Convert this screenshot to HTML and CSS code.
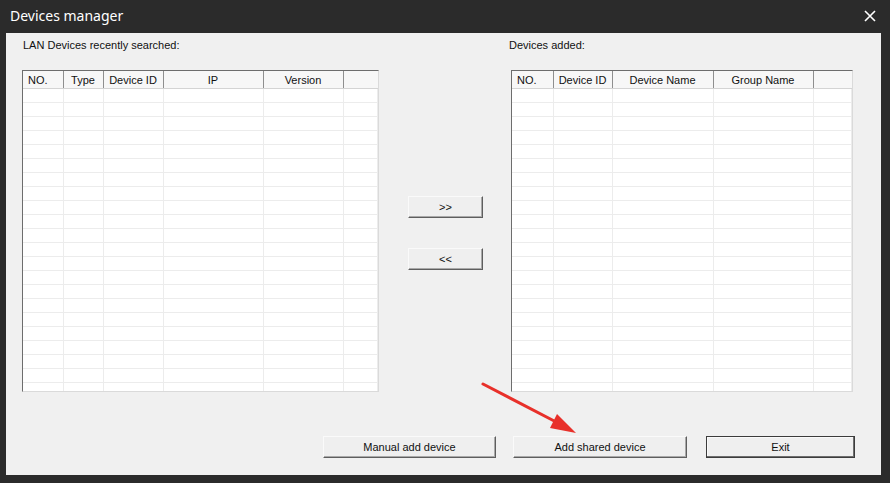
FILE: index.html
```html
<!DOCTYPE html>
<html lang="en">
<head>
    <meta charset="UTF-8">
    <title>Devices manager</title>
    <link rel="stylesheet" href="styles.css">
</head>
<body>
    <div class="window">
        <div class="titlebar">
            <span class="title">Devices manager</span>
            <svg class="close" width="12" height="12" viewBox="0 0 12 12">
                <path d="M1 1 L11 11 M11 1 L1 11" stroke="#fff" stroke-width="1.6"/>
            </svg>
        </div>
        <div class="client">
            <div class="lists">
                <div class="panel">
                    <div class="label">LAN Devices recently searched:</div>
                    <div class="grid left">
                        <table>
                            <colgroup>
                                <col style="width:40px"><col style="width:40px"><col style="width:60px">
                                <col style="width:100px"><col style="width:80px"><col>
                            </colgroup>
                            <thead>
                                <tr><th class="first">NO.</th><th>Type</th><th>Device ID</th><th>IP</th><th>Version</th><th></th></tr>
                            </thead>
                            <tbody></tbody>
                        </table>
                    </div>
                </div>
                <div class="middle">
                    <button class="btn move">&gt;&gt;</button>
                    <button class="btn move">&lt;&lt;</button>
                </div>
                <div class="panel">
                    <div class="label right-label">Devices added:</div>
                    <div class="grid right">
                        <table>
                            <colgroup>
                                <col style="width:41px"><col style="width:59px"><col style="width:101px">
                                <col style="width:100px"><col>
                            </colgroup>
                            <thead>
                                <tr><th class="first">NO.</th><th>Device ID</th><th>Device Name</th><th>Group Name</th><th></th></tr>
                            </thead>
                            <tbody></tbody>
                        </table>
                    </div>
                </div>
            </div>
            <div class="actions">
                <button class="btn manual">Manual add device</button>
                <button class="btn shared">Add shared device</button>
                <button class="btn exit">Exit</button>
            </div>
        </div>

        <!-- annotation arrow -->
        <svg class="arrow" width="890" height="483" viewBox="0 0 890 483">
            <line x1="483" y1="384" x2="560" y2="424" stroke="#e8302a" stroke-width="3" stroke-linecap="round"/>
            <polygon points="576,433 550,428 557,414" fill="#e8302a"/>
        </svg>
    </div>

    <script>
        // Fill empty rows in both list views
        document.querySelectorAll('.grid table').forEach(table => {
            const cols = table.querySelectorAll('thead th').length;
            const body = table.querySelector('tbody');
            for (let i = 0; i < 22; i++) {
                const row = document.createElement('tr');
                for (let j = 0; j < cols; j++) {
                    row.appendChild(document.createElement('td'));
                }
                body.appendChild(row);
            }
        });
    </script>
</body>
</html>
```

FILE: styles.css
```css
body {
    margin: 0;
    font-family: 'Liberation Sans', Arial, sans-serif;
    font-size: 11px;
    color: #111;
    background-color: #2b2b2b;
}

.window {
    position: relative;
    width: 890px;
    height: 483px;
    background-color: #2b2b2b;
    overflow: hidden;
}

.titlebar {
    height: 33px;
    display: flex;
    align-items: center;
    justify-content: space-between;
    padding: 0 14px 2px 10px;
    box-sizing: border-box;
}

.title {
    font-family: 'Noto Sans', sans-serif;
    font-size: 14px;
    color: #fff;
}

.close {
    display: block;
}

.client {
    margin: 0 9px 0 6px;
    height: 442px;
    background-color: #f0f0f0;
    padding: 6px 0 0 16px;
    box-sizing: border-box;
}

.lists {
    display: grid;
    grid-template-columns: 357px 132px 342px;
}

.label {
    height: 12px;
    line-height: 12px;
    margin: 0 0 19px 1px;
    white-space: nowrap;
}

.right-label {
    margin-left: -2px;
}

.grid {
    height: 322px;
    box-sizing: border-box;
    background-color: #fff;
    border-top: 1px solid #6d6d6d;
    border-left: 1px solid #6d6d6d;
    border-right: 1px solid #dadada;
    border-bottom: 1px solid #dadada;
    overflow: hidden;
}

table {
    width: 100%;
    border-collapse: collapse;
    table-layout: fixed;
}

th {
    height: 16px;
    padding: 1px 0 0;
    font-weight: normal;
    background-color: #f7f7f7;
    border-right: 1px solid #8f8f8f;
    border-bottom: 1px solid #d4d4d4;
    text-align: center;
    white-space: nowrap;
    overflow: hidden;
}

th.first {
    text-align: left;
    padding-left: 5px;
}

th:last-child {
    border-right: none;
}

td {
    height: 13px;
    padding: 0;
    border-right: 1px solid #ececec;
    border-bottom: 1px solid #ececec;
}

.middle {
    display: flex;
    flex-direction: column;
    gap: 30px;
    padding: 157px 0 0 29px;
}

.btn {
    font-family: 'Liberation Sans', Arial, sans-serif;
    font-size: 11px;
    color: #111;
    background-color: #efefef;
    border: 1px solid;
    border-color: #fafafa #5e5e5e #5e5e5e #fafafa;
    box-shadow: inset -1px -1px 0 #a9a9a9;
    height: 22px;
    padding: 0;
    box-sizing: border-box;
}

.move {
    width: 75px;
}

.actions {
    display: flex;
    margin: 44px 0 0 301px;
}

.manual {
    width: 173px;
}

.shared {
    width: 174px;
    margin-left: 17px;
}

.exit {
    width: 149px;
    margin-left: 19px;
    border: 1px solid #3c3c3c;
    box-shadow: inset -1px -1px 0 #6e6e6e, inset 1px 1px 0 #fafafa;
}

.arrow {
    position: absolute;
    left: 0;
    top: 0;
    pointer-events: none;
}
```
